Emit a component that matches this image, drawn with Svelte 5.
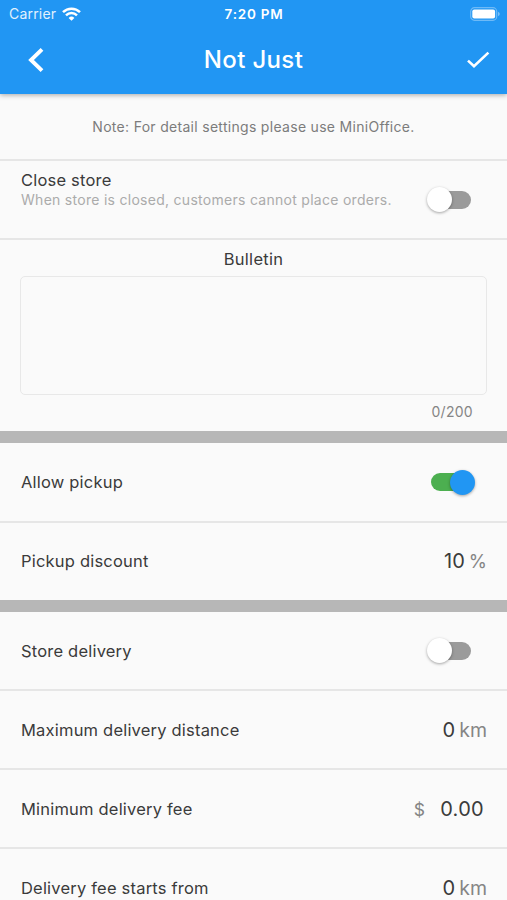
<script>
  let closed = $state(false);
  let pickup = $state(true);
  let delivery = $state(false);
  let bulletin = $state('');
</script>

{#snippet toggle(on, label, flip)}
  <button class="switch" class:on role="switch" aria-checked={on} aria-label={label} onclick={flip}>
    <span class="thumb"></span>
  </button>
{/snippet}

<div class="screen">
  <header>
    <div class="status">
      <div class="carrier">
        <span>Carrier</span>
        <svg width="19" height="14" viewBox="0 0 19 14" fill="none" stroke="#fff" stroke-width="2.5">
          <path d="M1 5.1a12.2 12.2 0 0 1 17 0" />
          <path d="M4 8.3a7.9 7.9 0 0 1 11 0" />
          <path d="M9.5 13.7 6.6 10.9a4.2 4.2 0 0 1 5.8 0z" fill="#fff" stroke="none" />
        </svg>
      </div>
      <span class="time">7:20 PM</span>
      <svg class="battery" width="30" height="14" viewBox="0 0 30 14">
        <rect x=".7" y=".7" width="26" height="12.6" rx="3.8" fill="none" stroke="#fff" stroke-opacity=".35" stroke-width="1.2" />
        <rect x="2.3" y="2.4" width="22.8" height="9.2" rx="2" fill="#fff" />
        <path d="M28 4.8q1.8.7 1.8 2.2T28 9.2z" fill="#fff" fill-opacity=".4" />
      </svg>
    </div>
    <div class="bar">
      <button class="icon" aria-label="Back">
        <svg width="18" height="26" viewBox="0 0 18 26" fill="none" stroke="#fff" stroke-width="3.9">
          <path d="M15 2.3 4 13 15 23.7" />
        </svg>
      </button>
      <h1>Not Just</h1>
      <button class="icon" aria-label="Save">
        <svg width="24" height="20" viewBox="0 0 24 20" fill="none" stroke="#fff" stroke-width="2.6">
          <path d="M2 10.6 8 16.3 22.4 2.6" />
        </svg>
      </button>
    </div>
  </header>

  <p class="note">Note: For detail settings please use MiniOffice.</p>

  <div class="row">
    <div class="text">
      <span class="label">Close store</span>
      <span class="hint">When store is closed, customers cannot place orders.</span>
    </div>
    {@render toggle(closed, 'Close store', () => (closed = !closed))}
  </div>

  <section class="bulletin">
    <label for="bulletin">Bulletin</label>
    <textarea id="bulletin" maxlength="200" bind:value={bulletin}></textarea>
    <span class="count">{bulletin.length}/200</span>
  </section>

  <div class="band"></div>

  <div class="row pickup">
    <span class="label">Allow pickup</span>
    {@render toggle(pickup, 'Allow pickup', () => (pickup = !pickup))}
  </div>
  <div class="row last">
    <span class="label">Pickup discount</span>
    <span class="value">10<em class="percent">%</em></span>
  </div>

  <div class="band"></div>

  <div class="row">
    <span class="label">Store delivery</span>
    {@render toggle(delivery, 'Store delivery', () => (delivery = !delivery))}
  </div>
  <div class="row">
    <span class="label">Maximum delivery distance</span>
    <span class="value">0<em>km</em></span>
  </div>
  <div class="row">
    <span class="label">Minimum delivery fee</span>
    <span class="value money"><em>$</em>0.00</span>
  </div>
  <div class="row">
    <span class="label">Delivery fee starts from</span>
    <span class="value">0<em>km</em></span>
  </div>
</div>

<style>
  :global(body) {
    margin: 0;
    background: #fafafa;
  }

  .screen {
    height: 900px;
    overflow: hidden;
    background: #fafafa;
    color: #3b3b3b;
    font-family: Inter, "Liberation Sans", sans-serif;
  }

  .screen * { box-sizing: border-box; }

  button {
    padding: 0;
    border: 0;
    background: none;
  }

  svg { display: block; }

  header {
    position: relative;
    height: 94px;
    background: #2196f3;
    color: #fff;
    box-shadow: 0 1px 5px rgba(0, 0, 0, 0.34);
  }

  .status {
    display: grid;
    grid-template-columns: 1fr auto 1fr;
    align-items: center;
    height: 27px;
    padding: 0 7px 0 8px;
    font-size: 14px;
  }

  .carrier {
    display: flex;
    align-items: center;
    gap: 6px;
    padding-left: 1px;
    color: #e2f1fd;
    letter-spacing: 0.2px;
  }

  .time {
    font-size: 13.5px;
    font-weight: 600;
    letter-spacing: 0.75px;
  }

  .battery { justify-self: end; }

  .bar {
    display: grid;
    grid-template-columns: 64px 1fr 64px;
    align-items: center;
    height: 66px;
  }

  .icon {
    display: flex;
    justify-content: center;
  }

  .icon:first-child { padding-left: 7px; }
  .icon:last-child { padding-left: 5px; }

  h1 {
    margin: 0;
    font-size: 24px;
    font-weight: 500;
    line-height: 28px;
    letter-spacing: 0.35px;
    text-align: center;
  }

  .note {
    display: flex;
    align-items: center;
    justify-content: center;
    box-sizing: border-box;
    height: 67px;
    margin: 0;
    border-bottom: 2px solid #e6e6e6;
    color: #7c7c7c;
    font-size: 14px;
    letter-spacing: 0.3px;
  }

  .row {
    display: flex;
    align-items: center;
    justify-content: space-between;
    height: 79px;
    padding: 0 20px 0 21px;
    border-bottom: 2px solid #e6e6e6;
  }

  .row.pickup { height: 80px; }

  .row.last {
    height: 77px;
    padding-bottom: 2px;
    border-bottom: 0;
  }

  .text {
    display: flex;
    flex-direction: column;
    align-self: flex-start;
    padding-top: 9px;
  }

  .label {
    font-size: 16.5px;
    line-height: 20px;
    letter-spacing: 0.2px;
  }

  .hint {
    color: #ababab;
    font-size: 14px;
    line-height: 19px;
    letter-spacing: 0.28px;
  }

  .switch {
    display: flex;
    align-items: center;
    width: 40px;
    height: 18px;
    margin-right: 16px;
    border-radius: 9px;
    background: #9b9b9b;
  }

  .thumb {
    flex: none;
    width: 25px;
    height: 25px;
    margin-left: -4px;
    border-radius: 50%;
    background: #fff;
    box-shadow: 0 1px 3px rgba(0, 0, 0, 0.35);
  }

  .switch.on { background: #4caf50; }

  .switch.on .thumb {
    margin-left: 19px;
    background: #2196f3;
  }

  .bulletin {
    display: flex;
    flex-direction: column;
    height: 191px;
    padding: 9px 20px 0;
  }

  .bulletin label {
    font-size: 16.5px;
    line-height: 20px;
    letter-spacing: 0.3px;
    text-align: center;
  }

  textarea {
    width: 100%;
    height: 119px;
    margin: 7px 0 0;
    border: 1px solid #e8e8e8;
    border-radius: 5px;
    outline: none;
    background: transparent;
    resize: none;
  }

  .count {
    align-self: flex-end;
    margin: 8px 14px 0 0;
    color: #858585;
    font-size: 14px;
    line-height: 18px;
    letter-spacing: 0.3px;
  }

  .band {
    height: 12px;
    background: #b7b7b7;
  }

  .value {
    font-size: 20px;
    line-height: 24px;
  }

  .value em {
    margin-left: 4px;
    color: #858585;
    font-size: 19.5px;
    font-style: normal;
  }

  .value .percent { font-size: 18.5px; }

  .money {
    margin-right: 3px;
    padding-top: 1px;
    letter-spacing: 0.3px;
  }

  .money em {
    margin: 0 15px 0 0;
    font-size: 17.5px;
  }
</style>
